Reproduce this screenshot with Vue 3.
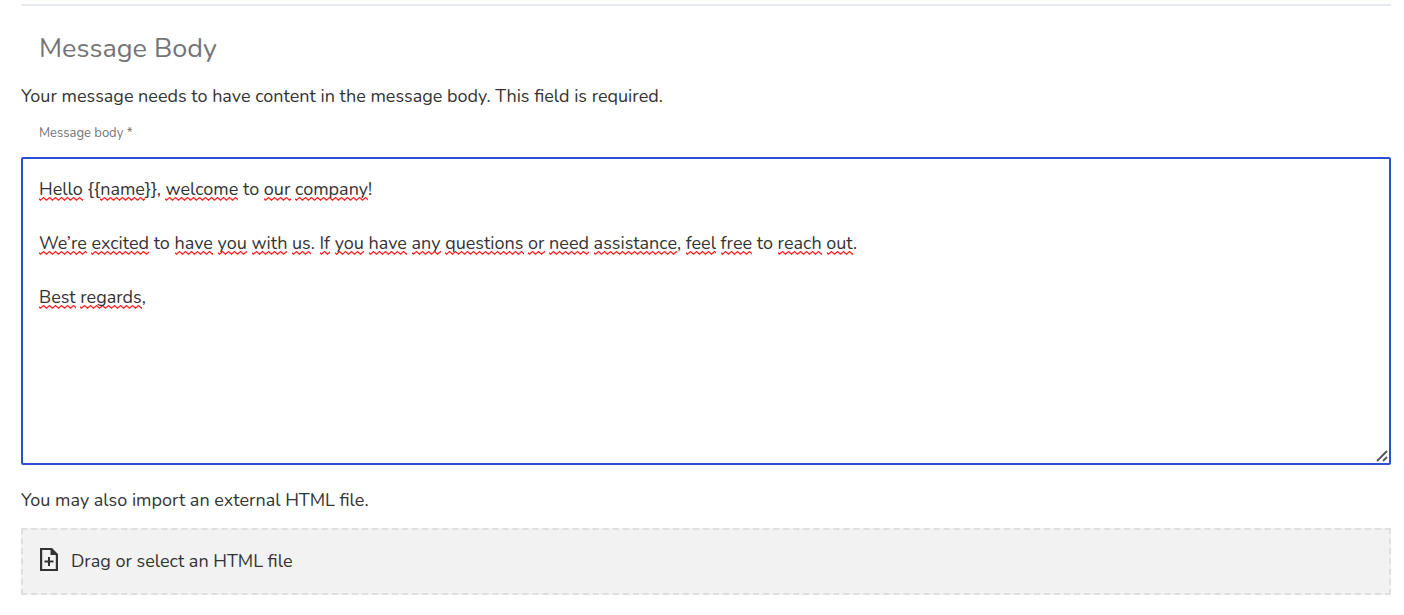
<script setup>
import { computed, ref } from 'vue'

const message = ref(
  'Hello {{name}}, welcome to our company!\n\nWe’re excited to have you with us. If you have any questions or need assistance, feel free to reach out.\n\nBest regards,'
)

const knownWords = ['to']

const pieces = computed(() =>
  message.value
    .split(/([A-Za-z’]+)/)
    .filter(Boolean)
    .map((text) => ({
      text,
      flagged: /[A-Za-z]/.test(text) && !knownWords.includes(text)
    }))
)
</script>

<template>
  <main class="page">
    <section class="section">
      <h2 class="title">Message Body</h2>
      <p class="text">Your message needs to have content in the message body. This field is required.</p>
      <label class="label" for="message-body">Message body *</label>
      <div class="editor">
        <div class="marks" aria-hidden="true"><span v-for="(piece, i) in pieces" :key="i" :class="{ flagged: piece.flagged }">{{ piece.text }}</span></div>
        <textarea id="message-body" v-model="message" class="input" spellcheck="false" required></textarea>
        <svg class="grip" viewBox="0 0 12 12" aria-hidden="true">
          <path d="M1 11L11 1M7 11L11 7" fill="none" stroke="#555" stroke-width="1.800" />
        </svg>
      </div>
      <p class="text">You may also import an external HTML file.</p>
      <button class="drop" type="button">
        <svg class="icon" viewBox="0 0 18 23" aria-hidden="true">
          <path fill="#333" fill-rule="evenodd" d="M0 0H12L18 6V23H0ZM2.200 2V21H15.800V7H10.500V2Z" />
          <path fill="#333" d="M8 9H10V12.500H13.500V14.500H10V18H8V14.500H4.500V12.500H8Z" />
        </svg>
        <span>Drag or select an HTML file</span>
      </button>
    </section>
  </main>
</template>

<style>
body {
  margin: 0;
  background: #fff;
}
</style>

<style scoped>
.page {
  padding: 4px 13px 20px 21px;
  color: #333;
  font-family: Nunito, Lato, sans-serif;
  font-size: 18px;
  line-height: 27px;
}
.section {
  display: flex;
  flex-direction: column;
  border-top: 2px solid #e5e9f2;
}
.title {
  margin: 25px 18px 16px;
  color: #757575;
  font-size: 27px;
  font-weight: 400;
  line-height: 36px;
}
.text {
  margin: 0;
}
.label {
  margin: 13px 18px 14px;
  color: #757575;
  font-size: 13px;
  line-height: 20px;
}
.editor {
  display: grid;
  margin-bottom: 22px;
}
.marks,
.input {
  grid-area: 1 / 1;
  box-sizing: border-box;
  margin: 0;
  padding: 17px 16px;
  border: 2px solid transparent;
  font: inherit;
  white-space: pre-wrap;
  overflow-wrap: break-word;
}
.marks {
  color: transparent;
}
.flagged {
  background: url("data:image/svg+xml,%3Csvg xmlns='http://www.w3.org/2000/svg' width='6' height='4'%3E%3Cpath d='M-1.500 .500L1.500 3.200L4.500 .500L7.500 3.200' fill='none' stroke='%23f22' stroke-width='1.200'/%3E%3C/svg%3E") left bottom repeat-x;
}
.input {
  display: block;
  width: 100%;
  height: 308px;
  border-color: #2b50d6;
  border-radius: 2px;
  outline: none;
  background: transparent;
  color: #333;
  resize: vertical;
}
.input::-webkit-resizer {
  background: transparent;
}
.grip {
  grid-area: 1 / 1;
  align-self: end;
  justify-self: end;
  width: 12px;
  height: 12px;
  margin: 3px;
  pointer-events: none;
}
.drop {
  display: flex;
  align-items: center;
  gap: 13px;
  margin-top: 14px;
  padding: 18px 17px;
  border: 2px dashed #dfdfdf;
  background: #f2f2f2;
  color: #333;
  font: inherit;
  text-align: left;
  cursor: pointer;
}
.icon {
  width: 18px;
  height: 23px;
  margin-bottom: 4px;
}
</style>
